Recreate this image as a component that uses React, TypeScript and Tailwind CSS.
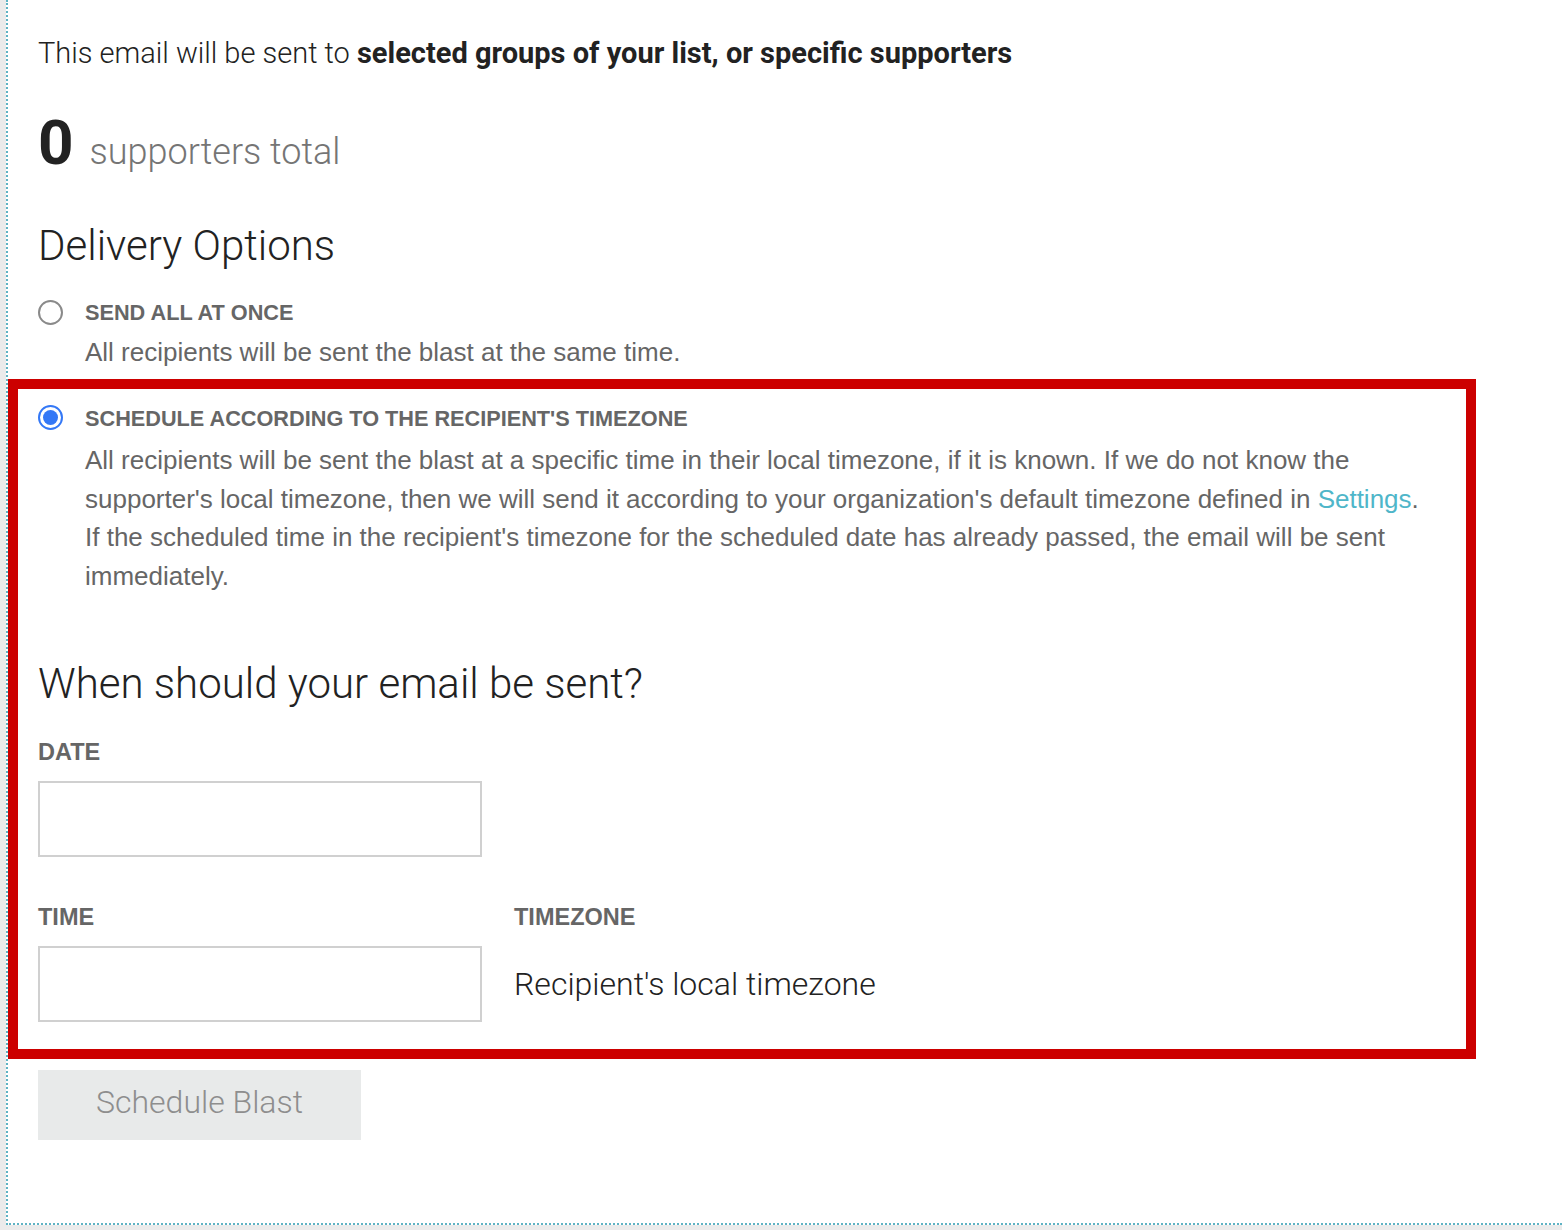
import React from "react"

const radioLabel = "font-['Liberation_Sans',Arial,sans-serif] font-bold text-[21.7px] leading-[26px] text-[#666] uppercase"
const fieldLabel = "font-['Liberation_Sans',Arial,sans-serif] font-bold text-[23.5px] leading-[28px] text-[#666] uppercase"
const body = "font-['Liberation_Sans',Arial,sans-serif] text-[26px] text-[#666]"

function Radio({ checked }: { checked?: boolean }) {
  return (
    <span
      className={
        "mt-[1px] flex h-[25px] w-[25px] shrink-0 items-center justify-center rounded-full border-2 bg-white " +
        (checked ? "border-[#3478f6]" : "border-[#8a8a8a]")
      }
    >
      {checked && <span className="h-[15px] w-[15px] rounded-full bg-[#3478f6]" />}
    </span>
  )
}

export default function App() {
  return (
    <div className="min-h-screen bg-[#ebebeb] pl-[6px] font-['Roboto',sans-serif]">
      <div className="h-[1225px] border-b-2 border-l-2 border-dotted border-[#5fb3c4] bg-white">
        <div className="pl-[30px] pt-[35px]">
          <p className="text-[29px] font-light leading-[36px] text-[#222]">
            This email will be sent to <span className="font-bold">selected groups of your list, or specific supporters</span>
          </p>

          <div className="mt-[41px] flex items-baseline gap-[16px]">
            <span className="text-[62px] font-bold leading-[62px] text-[#222]">0</span>
            <span className="text-[36px] font-light leading-[40px] text-[#757575]">supporters total</span>
          </div>

          <h2 className="mt-[47px] text-[42px] font-light leading-[50px] text-[#222]">Delivery Options</h2>

          <div className="mt-[28px] flex gap-[22px]">
            <Radio />
            <div>
              <div className={radioLabel + " mt-[1px]"}>Send all at once</div>
              <p className={body + " mt-[11px] leading-[30px]"}>All recipients will be sent the blast at the same time.</p>
            </div>
          </div>
        </div>

        <div className="mt-[12px] w-[1468px] border-[10px] border-[#cc0000] pb-[27px] pl-[20px] pt-[15px]">
          <div className="flex gap-[22px]">
            <Radio checked />
            <div>
              <div className={radioLabel + " mt-[2px]"}>Schedule according to the recipient's timezone</div>
              <p className={body + " mt-[9px] w-[1345px] leading-[38.7px]"}>
                All recipients will be sent the blast at a specific time in their local timezone, if it is known. If we do not know the supporter's local timezone, then we will send it according to your organization's default timezone defined in{" "}
                <a className="text-[#4fb6c9]">Settings</a>. If the scheduled time in the recipient's timezone for the scheduled date has already passed, the email will be sent immediately.
              </p>
            </div>
          </div>

          <h2 className="mt-[63px] text-[42px] font-light leading-[50px] text-[#222]">When should your email be sent?</h2>

          <div className={fieldLabel + " mt-[29px]"}>Date</div>
          <div className="mt-[15px] h-[76px] w-[444px] border-2 border-[#d0d0d0] bg-white" />

          <div className="mt-[46px] flex gap-[32px]">
            <div>
              <div className={fieldLabel}>Time</div>
              <div className="mt-[15px] h-[76px] w-[444px] border-2 border-[#d0d0d0] bg-white" />
            </div>
            <div>
              <div className={fieldLabel}>Timezone</div>
              <div className="mt-[35px] text-[32px] font-light leading-[36px] text-[#222]">Recipient's local timezone</div>
            </div>
          </div>
        </div>

        <div className="pl-[30px] pt-[11px]">
          <button className="h-[70px] w-[323px] bg-[#e8eaea] pb-[6px] text-[32px] font-light text-[#8e8e8e]">Schedule Blast</button>
        </div>
      </div>
    </div>
  )
}
